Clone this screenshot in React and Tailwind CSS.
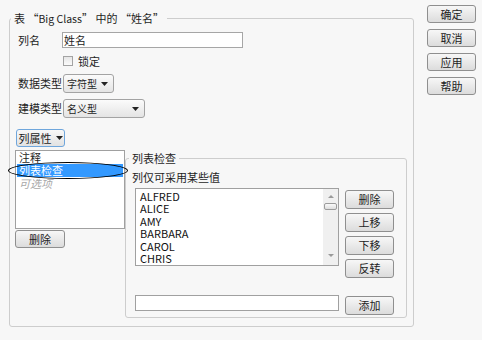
import React from 'react';
import clsx from 'clsx';

const names = ['ALFRED', 'ALICE', 'AMY', 'BARBARA', 'CAROL', 'CHRIS'];

function Btn({ children, className }) {
  return (
    <div
      className={clsx(
        'flex items-center justify-center rounded-[3px] border border-[#8f8f8f] bg-linear-to-b from-[#f7f7f7] to-[#dcdcdc] leading-none text-[#222]',
        className
      )}
    >
      {children}
    </div>
  );
}

function Caret() {
  return (
    <svg width="7" height="4" viewBox="0 0 7 4" className="flex-none">
      <path d="M0 0h7L3.5 4z" fill="#222" />
    </svg>
  );
}

function Select({ label, className }) {
  return (
    <div
      className={clsx(
        'flex h-[19px] items-center justify-between whitespace-nowrap rounded-[3px] border border-[#a3a3a3] bg-linear-to-b from-[#fbfbfb] to-[#e4e4e4] pl-[3px] pr-[5px]',
        className
      )}
    >
      <span className="text-[10px] leading-none">{label}</span>
      <Caret />
    </div>
  );
}

export default function App() {
  return (
    <div className="flex h-[340px] w-[482px] bg-[#f7f7f7] font-['Noto_Sans_CJK_SC',sans-serif] text-[11px] text-[#1e1e1e]">
      {/* main group */}
      <fieldset className="ml-[9px] mt-[10px] h-[317px] w-[405px] flex-none rounded-[3px] border border-[#cdcdcd]">
        <legend className="ml-[1px] px-[3px] leading-[16px]">
          表 “<span className="text-[10.5px]">Big Class</span>” 中的 “姓名”
        </legend>

        <div className="mt-[5px] flex items-center pl-[8px]">
          <span className="w-[44px] leading-none">列名</span>
          <div className="h-[16px] w-[181px] border border-[#a6a6a6] bg-white pl-[1px] leading-[14px]">姓名</div>
        </div>

        <div className="mt-[8px] flex h-[10px] items-center pl-[53px]">
          <div className="h-[10px] w-[10px] border border-[#a3a3a3] bg-linear-to-b from-[#e6e6e6] to-[#fbfbfb]" />
          <span className="ml-[5px] leading-none">锁定</span>
        </div>

        <div className="mt-[8px] flex items-center pl-[8px]">
          <span className="w-[45px] whitespace-nowrap leading-none">数据类型</span>
          <Select label="字符型" className="w-[51px]" />
        </div>

        <div className="mt-[6px] flex items-center pl-[8px]">
          <span className="w-[45px] whitespace-nowrap leading-none">建模类型</span>
          <Select label="名义型" className="w-[82px]" />
        </div>

        <div className="mt-[11px] pl-[6px]">
          <div className="flex h-[18px] w-[49px] items-center justify-center gap-[4px] whitespace-nowrap rounded-[3px] border border-[#6fa6dc] bg-linear-to-b from-[#f8f8f8] to-[#e2e2e2]">
            <span className="leading-none">列属性</span>
            <Caret />
          </div>
        </div>

        <div className="mt-[3px] flex items-start">
          <div className="flex flex-col pl-[5px]">
            <div className="relative h-[79px] w-[110px] border border-[#a0a0a0] bg-white">
              <div className="px-[1px] leading-[13px]">
                <div className="pl-[2px]">注释</div>
                <div className="bg-[#3399ff] pl-[2px] text-white">列表检查</div>
                <div className="pl-[2px] italic text-[#a8a8a8]">可选项</div>
              </div>
              <div className="absolute left-[-8px] top-[11px] h-[17px] w-[120px] rounded-[50%] border-[1.5px] border-black" />
            </div>
            <Btn className="mt-[1px] h-[18px] w-[50px]">删除</Btn>
          </div>

          <fieldset className="mt-[1px] h-[167px] w-[282px] flex-none rounded-[3px] border border-[#cdcdcd]">
            <legend className="ml-[3px] px-[3px] leading-[14px]">列表检查</legend>
            <div className="mt-[5px] pl-[6px] leading-[14px]">列仅可采用某些值</div>

            <div className="mt-[4px] flex items-start pl-[9px]">
              <div className="flex h-[78px] w-[204px] border border-[#a0a0a0] bg-white">
                <div className="flex-1 pl-[4px] pt-[1px] text-[11px] leading-[12.4px] text-[#111]">
                  {names.map((n) => (
                    <div key={n} className="h-[12.4px]">{n}</div>
                  ))}
                </div>
                <div className="flex w-[15px] flex-col items-center bg-[#f0f0f0] px-[1px]">
                  <div className="mt-[6px] h-0 w-0 border-x-[3px] border-b-[3px] border-x-transparent border-b-[#9a9a9a]" />
                  <div className="mt-[5px] h-[7px] w-[13px] rounded-[2px] border border-[#9c9c9c] bg-linear-to-b from-[#fafafa] to-[#dedede]" />
                  <div className="flex-1" />
                  <div className="mb-[8px] h-0 w-0 border-x-[3px] border-t-[3px] border-x-transparent border-t-[#9a9a9a]" />
                </div>
              </div>
              <div className="ml-[6px] mt-[2px] flex flex-col gap-[4px]">
                <Btn className="h-[19px] w-[49px]">删除</Btn>
                <Btn className="h-[19px] w-[49px]">上移</Btn>
                <Btn className="h-[19px] w-[49px]">下移</Btn>
                <Btn className="h-[19px] w-[49px]">反转</Btn>
              </div>
            </div>

            <div className="mt-[17px] flex items-start pl-[9px]">
              <div className="h-[16px] w-[204px] border border-[#a0a0a0] bg-white" />
              <Btn className="ml-[6px] mt-[1px] h-[19px] w-[49px]">添加</Btn>
            </div>
          </fieldset>
        </div>
      </fieldset>

      {/* dialog buttons */}
      <div className="ml-[13px] flex flex-col gap-[6px] pt-[5px]">
        <Btn className="h-[18px] w-[49px]">确定</Btn>
        <Btn className="h-[18px] w-[49px]">取消</Btn>
        <Btn className="h-[18px] w-[49px]">应用</Btn>
        <Btn className="h-[18px] w-[49px]">帮助</Btn>
      </div>
    </div>
  );
}
